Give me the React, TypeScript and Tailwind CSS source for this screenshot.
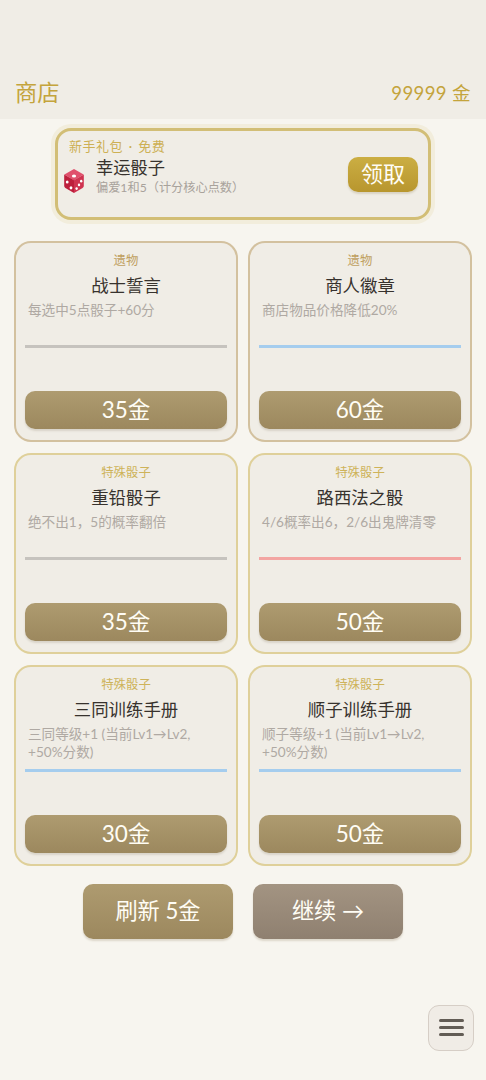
import React from 'react';
import clsx from 'clsx';

type Kind = 'relic' | 'dice';
type Rarity = 'common' | 'rare' | 'cursed';

interface ShopItem {
    kind: Kind;
    rarity: Rarity;
    name: string;
    description: string[];
    price: number;
}

const items: ShopItem[] = [
    { kind: 'relic', rarity: 'common', name: '战士誓言', description: ['每选中5点骰子+60分'], price: 35 },
    { kind: 'relic', rarity: 'rare', name: '商人徽章', description: ['商店物品价格降低20%'], price: 60 },
    { kind: 'dice', rarity: 'common', name: '重铅骰子', description: ['绝不出1，5的概率翻倍'], price: 35 },
    { kind: 'dice', rarity: 'cursed', name: '路西法之骰', description: ['4/6概率出6，2/6出鬼牌清零'], price: 50 },
    { kind: 'dice', rarity: 'rare', name: '三同训练手册', description: ['三同等级+1 (当前Lv1→Lv2,', '+50%分数)'], price: 30 },
    { kind: 'dice', rarity: 'rare', name: '顺子训练手册', description: ['顺子等级+1 (当前Lv1→Lv2,', '+50%分数)'], price: 50 },
];

const kindLabel: Record<Kind, string> = {
    relic: '遗物',
    dice: '特殊骰子',
};

const rarityLine: Record<Rarity, string> = {
    common: 'bg-[#c6c3be]',
    rare: 'bg-[#a5cdee]',
    cursed: 'bg-[#f3a5a2]',
};

function DiceIcon() {
    return (
        <svg viewBox="0 0 22 26" className="h-[26px] w-[22px]">
            <path d="M11 1 L20.6 6.4 L11 12.4 L1.4 6.4 Z" fill="#e0506c" />
            <path d="M1.2 6.4 L11 12.2 V25 L2.4 20 Q1.2 19.2 1.2 18 Z" fill="#bd1f3c" />
            <path d="M20.8 6.4 L11 12.2 V25 L19.6 20 Q20.8 19.2 20.8 18 Z" fill="#cf3350" />
            <ellipse cx="11" cy="8" rx="2.1" ry="1.5" fill="#fff" />
            <ellipse cx="4.2" cy="14" rx="1.4" ry="1.6" fill="#fff" />
            <ellipse cx="8" cy="19.8" rx="1.4" ry="1.6" fill="#fff" />
            <ellipse cx="18.2" cy="13.2" rx="1.2" ry="1.4" fill="#fff" />
            <ellipse cx="16" cy="16.9" rx="1.2" ry="1.4" fill="#fff" />
            <ellipse cx="13.6" cy="20.6" rx="1.2" ry="1.4" fill="#fff" />
        </svg>
    );
}

function Header({ gold }: { gold: number }) {
    return (
        <header className="flex h-[119px] items-end justify-between bg-[#f0ede6] px-[15px] pb-[10px] text-[#c4a43c]">
            <h1 className="text-[22.3px] leading-8">商店</h1>
            <span className="text-[18.6px] leading-[31px] tracking-[0.35px]">{gold} 金</span>
        </header>
    );
}

function GiftBanner() {
    return (
        <section className="mx-[55px] mt-[9px] flex h-[92px] rounded-2xl border-3 border-[#d2be76] bg-[#f0ede6] pl-[5px] pr-[10px] shadow-[0_0_0_4px_#f2eddc]">
            <div className="flex-1">
                <p className="pl-[6px] pt-[6px] text-[13px] leading-[18px] tracking-[0.5px] [word-spacing:1.8px] text-[#cdb054]">
                    新手礼包 · 免费
                </p>
                <div className="flex">
                    <div className="mr-[11px] mt-[13px] shrink-0">
                        <DiceIcon />
                    </div>
                    <div>
                        <h2 className="mt-px text-[17.3px] leading-[24px] text-[#37322d]">幸运骰子</h2>
                        <p className="whitespace-nowrap text-[12.2px] leading-[16px] text-[#a8a29b]">偏爱1和5（计分核心点数）</p>
                    </div>
                </div>
            </div>
            <button className="mt-[26px] h-[35px] w-[70px] shrink-0 rounded-[10px] bg-linear-to-b from-[#cbae43] to-[#b8962e] pb-px text-[22px] leading-[32px] text-[#fffdf5] shadow-[0_2px_2px_#d9d3c3]">
                领取
            </button>
        </section>
    );
}

function ItemCard({ item }: { item: ShopItem }) {
    return (
        <article
            className={clsx(
                'flex h-[201px] flex-col rounded-[17px] border-2 bg-[#f0ede6] px-[9px] pt-[9px]',
                item.kind === 'relic' ? 'border-[#d3c19f]' : 'border-[#dfd09a]',
            )}
        >
            <p className={clsx('pt-px text-center text-[12.4px] leading-4', item.kind === 'relic' ? 'text-[#bf9f60]' : 'text-[#ceb35a]')}>
                {kindLabel[item.kind]}
            </p>
            <h3 className="mt-[4px] text-center text-[17.4px] leading-[26px] text-[#37322d]">{item.name}</h3>
            <div className="mt-[2px] h-[43px] whitespace-nowrap pl-[3px] text-[13.6px] leading-[18px] text-[#afa9a3]">
                {item.description.map((line) => (
                    <p key={line}>{line}</p>
                ))}
            </div>
            <div className={clsx('mt-px h-[3px] shrink-0', rarityLine[item.rarity])} />
            <button className="mt-[43px] h-[38px] shrink-0 rounded-[10px] bg-linear-to-b from-[#ae9b70] to-[#9c885e] text-[22.5px] leading-[36px] text-[#fffdf5] shadow-[0_2px_2px_#d9d4c9]">
                {item.price}金
            </button>
        </article>
    );
}

export default function App() {
    return (
        <div className="flex h-[1080px] w-[486px] flex-col bg-[#f7f5ef] font-[Lato,'Noto_Sans_CJK_SC',sans-serif]">
            <Header gold={99999} />
            <GiftBanner />
            <main className="mx-[14px] mt-[20.5px] grid grid-cols-2 gap-x-[10px] gap-y-[11px]">
                {items.map((item) => (
                    <ItemCard key={item.name} item={item} />
                ))}
            </main>
            <div className="mt-[18px] flex justify-center gap-5 text-[22.2px] text-[#fffdf5]">
                <button className="h-[55px] w-[150px] rounded-[10px] bg-linear-to-b from-[#ae9b70] to-[#9c885e] shadow-[0_2px_2px_#ddd7ca]">
                    刷新 5金
                </button>
                <button className="h-[55px] w-[150px] rounded-[10px] bg-linear-to-b from-[#a39482] to-[#8f8070] shadow-[0_2px_2px_#ddd7ca]">
                    继续 →
                </button>
            </div>
            <button
                aria-label="menu"
                className="mb-[29.5px] mr-[12px] mt-auto flex size-[46px] flex-col items-center justify-center gap-[4.5px] self-end rounded-[11px] border border-[#d6cec6] bg-[#f0ece6]"
            >
                <span className="h-[2.5px] w-[25px] rounded-full bg-[#625c55]" />
                <span className="h-[2.5px] w-[25px] rounded-full bg-[#625c55]" />
                <span className="h-[2.5px] w-[25px] rounded-full bg-[#625c55]" />
            </button>
        </div>
    );
}
